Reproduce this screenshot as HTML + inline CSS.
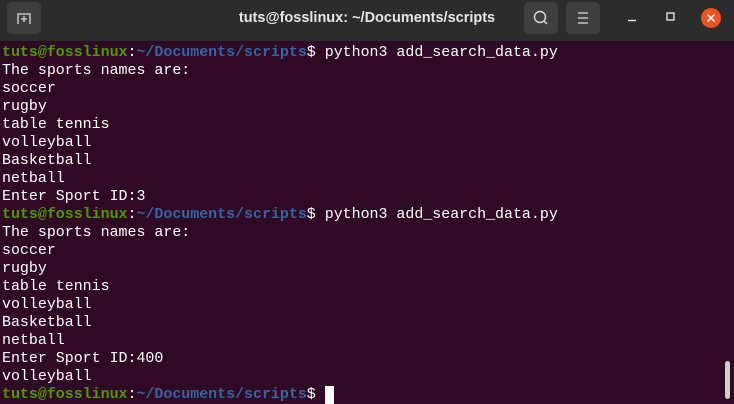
<!DOCTYPE html>
<html><head><meta charset="utf-8"><style>
html,body{margin:0;padding:0;width:734px;height:403px;overflow:hidden;background:#300a24}
.hdr{position:absolute;left:0;top:0;width:734px;height:41px;background:#2c2c2c}
.btn{position:absolute;top:2px;width:34px;height:32px;background:#3f3f3f;border-radius:5px}
.title{position:absolute;left:0;width:734px;top:0;text-align:center;color:#e6e6e6;font:bold 14.5px "Liberation Sans",sans-serif;line-height:37px}
pre{position:absolute;left:2px;top:44px;margin:0;font:14.95px "Liberation Mono",monospace;line-height:18px;color:#fff}
.g{color:#4e9a06;font-weight:bold}.b{color:#3465a4;font-weight:bold}
.cur{display:inline-block;width:9px;height:18px;background:#fff;vertical-align:top}
</style></head><body>
<div class="hdr">
<div class="btn" style="left:7px"><svg width="34" height="32"><path d="M11 22V12h12v10" fill="none" stroke="#ddd" stroke-width="1.3"/><path d="M17 14v6M14 17h6" stroke="#ddd" stroke-width="1.3"/></svg></div>
<div class="title">tuts@fosslinux: ~/Documents/scripts</div>
<div class="btn" style="left:524px"><svg width="34" height="32"><circle cx="16" cy="15" r="5.5" fill="none" stroke="#ddd" stroke-width="1.4"/><path d="M20 19l3 3" stroke="#ddd" stroke-width="1.4"/></svg></div>
<div class="btn" style="left:566px"><svg width="34" height="32"><path d="M12 11h10M12 16h10M12 21h10" stroke="#ddd" stroke-width="1.3"/></svg></div>
<svg style="position:absolute;left:620px;top:0" width="114" height="40"><path d="M8 20.5h8" stroke="#eee" stroke-width="1.4"/><rect x="47" y="13" width="7" height="7" fill="none" stroke="#eee" stroke-width="1.3"/><circle cx="91" cy="18" r="10" fill="#e95420"/><path d="M87.5 14.5l7 7M94.5 14.5l-7 7" stroke="#fff" stroke-width="1.5"/></svg>
</div>
<pre><span class="g">tuts@fosslinux</span>:<span class="b">~/Documents/scripts</span>$ python3 add_search_data.py
The sports names are:
soccer
rugby
table tennis
volleyball
Basketball
netball
Enter Sport ID:3
<span class="g">tuts@fosslinux</span>:<span class="b">~/Documents/scripts</span>$ python3 add_search_data.py
The sports names are:
soccer
rugby
table tennis
volleyball
Basketball
netball
Enter Sport ID:400
volleyball
<span class="g">tuts@fosslinux</span>:<span class="b">~/Documents/scripts</span>$ <span class="cur"></span></pre>
<div style="position:absolute;left:725px;top:361px;width:5px;height:38px;background:#cfcfcf;border-radius:3px"></div>
</body></html>
